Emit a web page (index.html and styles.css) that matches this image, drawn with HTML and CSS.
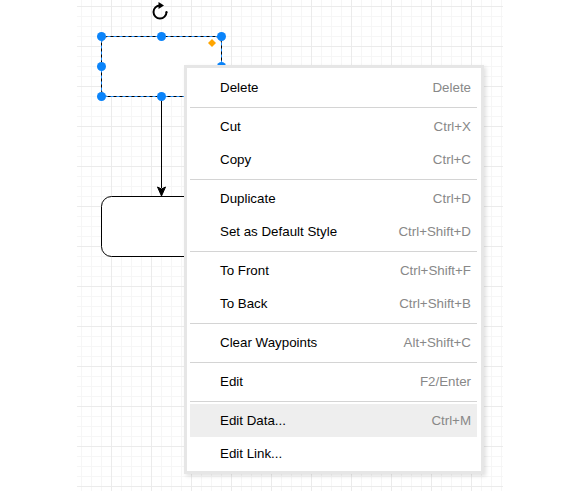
FILE: index.html
```html
<!DOCTYPE html>
<html lang="en">
<head>
    <meta charset="UTF-8">
    <meta name="viewport" content="width=device-width, initial-scale=1.0">
    <title>Diagram Context Menu</title>
    <link rel="stylesheet" href="styles.css">
</head>
<body>
    <div class="page">
        <div class="canvas">
            <!-- shapes sit on a free canvas, so coordinates are the content -->
            <svg class="diagram" width="426" height="491" viewBox="77 0 426 491">
                <!-- rotate handle -->
                <path d="M 160 5.5 A 6.5 6.5 0 1 0 166.5 12" fill="none" stroke="#000" stroke-width="2"/>
                <polygon points="158.5,2 164,5.5 158.5,9" fill="#000"/>
                <circle cx="166.5" cy="12" r="1.1" fill="#000"/>

                <!-- upper shape -->
                <rect x="101.5" y="36.5" width="120" height="60" rx="6" fill="#fff" stroke="#000" stroke-width="1"/>
                <rect x="101.5" y="36.5" width="120" height="60" fill="none" stroke="#1f8fff" stroke-width="1" stroke-dasharray="3 3"/>

                <!-- connector -->
                <line x1="161.5" y1="96" x2="161.5" y2="188" stroke="#000" stroke-width="1"/>
                <polygon points="157.5,187 161.5,196 165.5,187 161.5,189" fill="#000" stroke="#000" stroke-width="1"/>

                <!-- lower shape -->
                <rect x="101.5" y="196.5" width="120" height="60" rx="10" fill="#fff" stroke="#000" stroke-width="1"/>

                <!-- handles -->
                <circle cx="101.5" cy="36.5" r="4.5" fill="#0b84fa"/>
                <circle cx="161.5" cy="36.5" r="4.5" fill="#0b84fa"/>
                <circle cx="221.5" cy="36.5" r="4.5" fill="#0b84fa"/>
                <circle cx="101.5" cy="66.5" r="4.5" fill="#0b84fa"/>
                <circle cx="221.5" cy="66.5" r="4.5" fill="#0b84fa"/>
                <circle cx="101.5" cy="96.5" r="4.5" fill="#0b84fa"/>
                <circle cx="161.5" cy="96.5" r="4.5" fill="#0b84fa"/>
                <polygon points="212,39 216,43 212,47 208,43" fill="#ffa500"/>
            </svg>

            <div class="menu">
                <div class="item"><span>Delete</span><span class="key">Delete</span></div>
                <div class="sep"></div>
                <div class="item"><span>Cut</span><span class="key">Ctrl+X</span></div>
                <div class="item"><span>Copy</span><span class="key">Ctrl+C</span></div>
                <div class="sep"></div>
                <div class="item"><span>Duplicate</span><span class="key">Ctrl+D</span></div>
                <div class="item"><span>Set as Default Style</span><span class="key">Ctrl+Shift+D</span></div>
                <div class="sep"></div>
                <div class="item"><span>To Front</span><span class="key">Ctrl+Shift+F</span></div>
                <div class="item"><span>To Back</span><span class="key">Ctrl+Shift+B</span></div>
                <div class="sep"></div>
                <div class="item"><span>Clear Waypoints</span><span class="key">Alt+Shift+C</span></div>
                <div class="sep"></div>
                <div class="item"><span>Edit</span><span class="key">F2/Enter</span></div>
                <div class="sep"></div>
                <div class="item hover"><span>Edit Data...</span><span class="key">Ctrl+M</span></div>
                <div class="item"><span>Edit Link...</span><span class="key"></span></div>
            </div>
        </div>
    </div>
</body>
</html>
```

FILE: styles.css
```css
body {
    margin: 0;
    padding: 0;
    background-color: #ffffff;
    font-family: "Liberation Sans", Arial, sans-serif;
    overflow: hidden;
}

.page {
    display: flex;
    width: 576px;
    height: 491px;
}

.canvas {
    position: relative;
    margin-left: 77px;
    width: 426px;
    height: 491px;
    background-color: #ffffff;
    background-image:
        linear-gradient(to right, #ebebeb 1px, transparent 1px),
        linear-gradient(to bottom, #ebebeb 1px, transparent 1px),
        linear-gradient(to right, #f6f6f6 1px, transparent 1px),
        linear-gradient(to bottom, #f6f6f6 1px, transparent 1px);
    background-size: 40px 40px, 40px 40px, 10px 10px, 10px 10px;
    background-position: 34px 0, 0 6px, 4px 0, 0 6px;
}

.diagram {
    position: absolute;
    left: 0;
    top: 0;
}

.menu {
    position: absolute;
    left: 107px;
    top: 65px;
    width: 287px;
    padding: 3px 4px 1px 3px;
    background-color: #ffffff;
    border: 3px solid #e6e6e6;
    box-shadow: 2px 2px 4px rgba(0, 0, 0, 0.12);
}

.item {
    display: flex;
    align-items: center;
    justify-content: space-between;
    height: 33px;
    padding: 0 6px 0 30px;
    font-size: 13.33px;
    color: #000000;
}

.item.hover {
    background-color: #eeeeee;
}

.key {
    color: #888888;
}

.sep {
    height: 1px;
    margin: 3px 0 2px;
    background-color: #d4d4d4;
}
```
